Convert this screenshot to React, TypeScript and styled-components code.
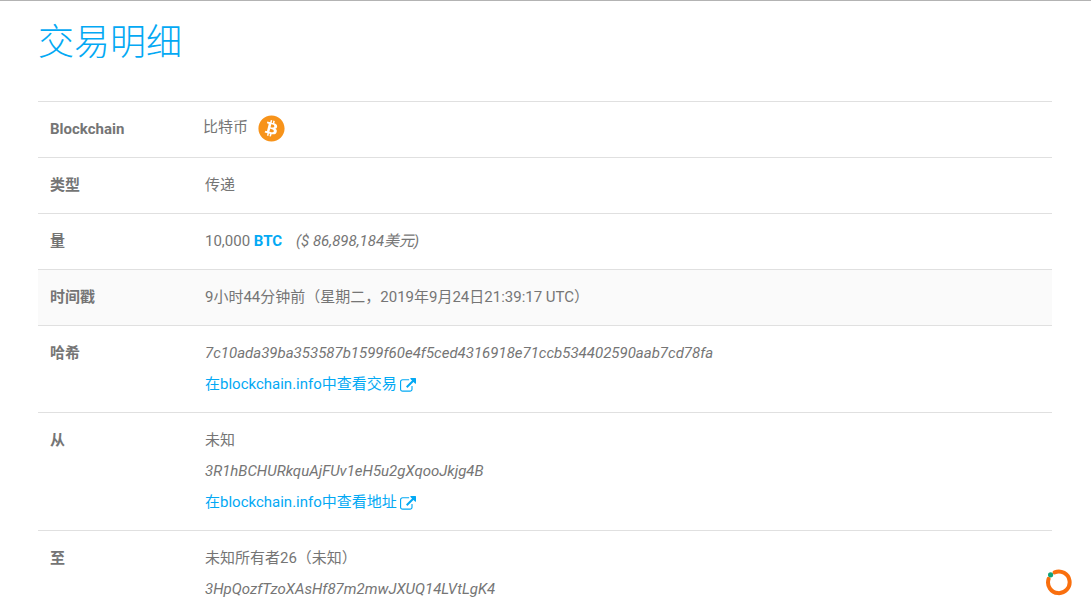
import React from "react";
import styled, { createGlobalStyle } from "styled-components";
import { FaBitcoin } from "react-icons/fa";

const GlobalStyle = createGlobalStyle`
  *, *::before, *::after {
    box-sizing: border-box;
  }
  body {
    margin: 0;
    background: #fff;
    color: #757575;
    font-family: Roboto, "Noto Sans CJK SC", sans-serif;
    font-size: 15px;
    line-height: 31px;
  }
`;

const Page = styled.main`
  border-top: 1px solid #b3b3b3;
  padding: 17px 39px 0 38px;
`;

const Title = styled.h1`
  margin: 0 0 33px;
  color: #03a9f4;
  font-size: 36px;
  font-weight: 300;
  line-height: 50px;
`;

const Details = styled.table`
  width: 100%;
  border-collapse: separate;
  border-spacing: 0;
  table-layout: fixed;
`;

const Row = styled.tr<{ $active?: boolean }>`
  background: ${(p) => (p.$active ? "#fafafa" : "transparent")};
`;

const Label = styled.th`
  width: 155px;
  padding: 12px;
  border-top: 1px solid #e0e0e0;
  font-weight: 700;
  text-align: left;
  vertical-align: top;
`;

const Value = styled.td`
  padding: 12px;
  border-top: 1px solid #e0e0e0;
  vertical-align: top;
`;

const Line = styled.div`
  height: 31px;
  white-space: nowrap;
`;

const Chain = styled.div`
  display: flex;
  align-items: flex-start;
  gap: 10px;
  height: 31px;
  margin-left: -2px;
  line-height: 27px;
`;

const BitcoinMark = styled(FaBitcoin)`
  width: 27px;
  height: 27px;
  margin-top: 1px;
  color: #f7931a;
`;

const Currency = styled.a`
  color: #03a9f4;
  font-weight: 700;
  text-decoration: none;
`;

const Fiat = styled.em`
  margin-left: 14px;
`;

const ExplorerLink = styled.a`
  display: inline-flex;
  align-items: center;
  gap: 3px;
  color: #03a9f4;
  text-decoration: none;
`;

const ExternalSvg = styled.svg`
  width: 16px;
  height: 16px;
  margin-top: 2px;
  fill: currentColor;
`;

const HelpButton = styled.button`
  position: fixed;
  right: 18px;
  bottom: 15px;
  width: 28px;
  height: 28px;
  padding: 0;
  border: 0;
  background: transparent;
  cursor: pointer;

  svg {
    display: block;
  }
`;

function Explorer({ children }: { children: React.ReactNode }) {
  return (
    <Line>
      <ExplorerLink href="#explorer">
        {children}
        <ExternalSvg viewBox="0 0 1792 1792" aria-hidden="true">
          <path d="M1408 928v320q0 119-84.5 203.5t-203.5 84.5h-832q-119 0-203.5-84.5t-84.5-203.5v-832q0-119 84.5-203.5t203.5-84.5h704q14 0 23 9t9 23v64q0 14-9 23t-23 9h-704q-66 0-113 47t-47 113v832q0 66 47 113t113 47h832q66 0 113-47t47-113v-320q0-14 9-23t23-9h64q14 0 23 9t9 23zm384-864v512q0 26-19 45t-45 19-45-19l-176-176-652 652q-10 10-23 10t-23-10l-114-114q-10-10-10-23t10-23l652-652-176-176q-19-19-19-45t19-45 45-19h512q26 0 45 19t19 45z" />
        </ExternalSvg>
      </ExplorerLink>
    </Line>
  );
}

export default function App() {
  return (
    <>
      <GlobalStyle />
      <Page lang="zh-CN">
        <Title>交易明细</Title>
        <Details>
          <tbody>
            <Row>
              <Label scope="row">Blockchain</Label>
              <Value>
                <Chain>
                  比特币
                  <BitcoinMark aria-hidden="true" />
                </Chain>
              </Value>
            </Row>
            <Row>
              <Label scope="row">类型</Label>
              <Value>
                <Line>传递</Line>
              </Value>
            </Row>
            <Row>
              <Label scope="row">量</Label>
              <Value>
                <Line>
                  10,000 <Currency href="#btc">BTC</Currency>
                  <Fiat>($ 86,898,184美元)</Fiat>
                </Line>
              </Value>
            </Row>
            <Row $active>
              <Label scope="row">时间戳</Label>
              <Value>
                <Line>9小时44分钟前（星期二，2019年9月24日21:39:17 UTC）</Line>
              </Value>
            </Row>
            <Row>
              <Label scope="row">哈希</Label>
              <Value>
                <Line>
                  <em>7c10ada39ba353587b1599f60e4f5ced4316918e71ccb534402590aab7cd78fa</em>
                </Line>
                <Explorer>在blockchain.info中查看交易</Explorer>
              </Value>
            </Row>
            <Row>
              <Label scope="row">从</Label>
              <Value>
                <Line>未知</Line>
                <Line>
                  <em>3R1hBCHURkquAjFUv1eH5u2gXqooJkjg4B</em>
                </Line>
                <Explorer>在blockchain.info中查看地址</Explorer>
              </Value>
            </Row>
            <Row>
              <Label scope="row">至</Label>
              <Value>
                <Line>未知所有者26（未知）</Line>
                <Line>
                  <em>3HpQozfTzoXAsHf87m2mwJXUQ14LVtLgK4</em>
                </Line>
              </Value>
            </Row>
          </tbody>
        </Details>
      </Page>
      <HelpButton type="button" aria-label="帮助">
        <svg width="28" height="28" viewBox="0 0 28 28" aria-hidden="true">
          <path
            d="M9.6 4.4A10.8 10.8 0 1 1 3.6 10.9"
            fill="none"
            stroke="#f96f0e"
            strokeWidth="4"
            strokeLinecap="round"
          />
          <circle cx="5.6" cy="6.8" r="2.6" fill="#12a37a" />
        </svg>
      </HelpButton>
    </>
  );
}
